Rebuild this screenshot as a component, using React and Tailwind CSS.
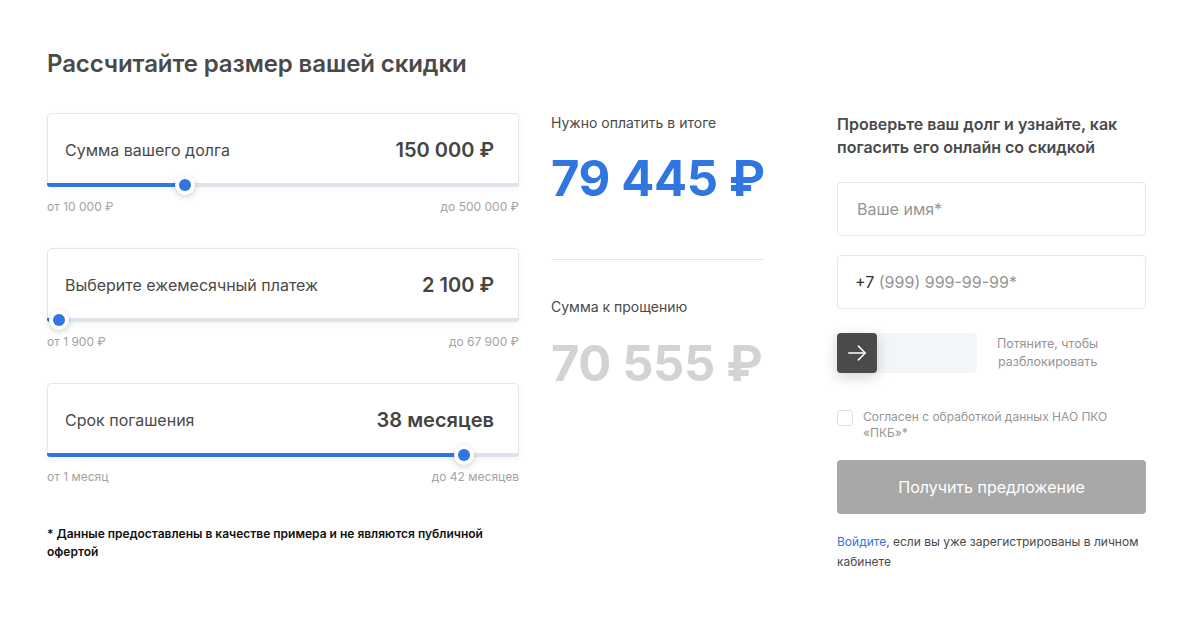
import React from "react";

function SliderCard({ label, value, pct, min, max }) {
  return (
    <div className="flex flex-col">
      <div className="flex flex-col rounded-[5px] border border-[#dfe7f1] shadow-[0_2px_6px_rgba(30,60,110,0.06)]">
        <div className="flex h-[69px] items-center justify-between pl-[17px] pr-[24px] pt-[3px]">
          <span className="text-[16px] text-[#4a4a4a]">{label}</span>
          <span className="text-[20px] font-semibold text-[#444]">{value}</span>
        </div>
        <div className="relative -mx-px -mb-px h-[4px] rounded-b-[3px] bg-[#dfe4ec]">
          <div className="h-full rounded-bl-[3px] bg-[#2f76e0]" style={{ width: `${pct}%` }} />
          <div
            className="absolute top-1/2 flex h-[20px] w-[20px] -translate-x-1/2 -translate-y-1/2 items-center justify-center rounded-full bg-white shadow-[0_2px_6px_rgba(0,0,0,0.18)]"
            style={{ left: `${pct}%` }}
          >
            <div className="h-[12px] w-[12px] rounded-full bg-[#2f76e0]" />
          </div>
        </div>
      </div>
      <div className="mt-[12px] flex justify-between text-[12px] leading-[16px] text-[#a3a3a3]">
        <span>{min}</span>
        <span>{max}</span>
      </div>
    </div>
  );
}

export default function App() {
  return (
    <div
      className="min-h-[624px] w-[1200px] bg-white pl-[47px] pt-[48px]"
      style={{ fontFamily: "Inter, 'Noto Sans', sans-serif" }}
    >
      <div className="flex">
        <div className="flex w-[472px] flex-col">
          <h1 className="text-[24px] font-semibold leading-[32px] tracking-[-0.1px] text-[#4a4a4a]">
            Рассчитайте размер вашей скидки
          </h1>
          <div className="mt-[33px] flex flex-col gap-[33px]">
            <SliderCard label="Сумма вашего долга" value="150 000 ₽" pct={29.2} min="от 10 000 ₽" max="до 500 000 ₽" />
            <SliderCard label="Выберите ежемесячный платеж" value="2 100 ₽" pct={2.5} min="от 1 900 ₽" max="до 67 900 ₽" />
            <SliderCard label="Срок погашения" value="38 месяцев" pct={88.3} min="от 1 месяц" max="до 42 месяцев" />
          </div>
          <p className="mt-[40px] text-[12px] font-semibold leading-[18px] text-[#111]">
            * Данные предоставлены в качестве примера и не являются публичной офертой
          </p>
        </div>

        <div className="ml-[32px] flex w-[213px] flex-col pt-[65px]">
          <div className="text-[14px] leading-[20px] text-[#4a4a4a]">Нужно оплатить в итоге</div>
          <div className="mt-[18px] whitespace-nowrap text-[49px] font-bold leading-[56px] tracking-[-0.4px] text-[#2f76e0]">79 445 ₽</div>
          <div className="mt-[52px] h-px bg-[#dde7f3]" />
          <div className="mt-[37px] text-[14px] leading-[20px] text-[#4a4a4a]">Сумма к прощению</div>
          <div className="mt-[19px] whitespace-nowrap text-[49px] font-bold leading-[56px] tracking-[-0.4px] text-[#d3d3d3]">70 555 ₽</div>
        </div>

        <div className="ml-[73px] flex w-[309px] flex-col pt-[65px]">
          <h2 className="text-[16px] font-semibold leading-[23px] text-[#4a4a4a]">
            Проверьте ваш долг и узнайте, как погасить его онлайн со скидкой
          </h2>
          <div className="mt-[23px] flex h-[54px] items-center rounded-[4px] border border-[#dfe7f1] px-[19px] text-[16px] text-[#959595]">
            Ваше имя*
          </div>
          <div className="mt-[19px] flex h-[54px] items-center rounded-[4px] border border-[#dfe7f1] px-[17px] text-[16px] text-[#959595]">
            <span className="text-[#333]">+7</span>&nbsp;(999) 999-99-99*
          </div>
          <div className="mt-[24px] flex items-center">
            <div className="flex h-[40px] w-[140px] rounded-[5px] bg-[#f3f6f9]">
              <div className="flex h-[40px] w-[40px] items-center justify-center rounded-[4px] bg-[#4a4a4a] shadow-[0_4px_14px_rgba(0,0,0,0.18)]">
                <svg width="22" height="22" viewBox="0 0 24 24" fill="none" stroke="white" strokeWidth="1.6" strokeLinecap="round" strokeLinejoin="round">
                  <path d="M3 12h18" />
                  <path d="M13.5 4.5 21 12l-7.5 7.5" />
                </svg>
              </div>
            </div>
            <div className="ml-[20px] text-center text-[12.5px] leading-[18px] text-[#959595]">
              Потяните, чтобы<br />разблокировать
            </div>
          </div>
          <div className="mt-[36px] flex items-start gap-[10px]">
            <div className="mt-[1px] h-[16px] w-[16px] shrink-0 rounded-[3px] border border-[#d7e1ed] bg-white" />
            <div className="text-[12px] leading-[16px] text-[#959595]">
              Согласен с обработкой данных НАО ПКО «ПКБ»*
            </div>
          </div>
          <button className="mt-[19px] flex h-[54px] items-center justify-center rounded-[4px] bg-[#a8a8a8] text-[16px] text-white">
            Получить предложение
          </button>
          <p className="mt-[18px] text-[12px] leading-[20px] text-[#4a4a4a]">
            <span className="text-[#2f76e0]">Войдите</span>, если вы уже зарегистрированы в личном кабинете
          </p>
        </div>
      </div>
    </div>
  );
}
